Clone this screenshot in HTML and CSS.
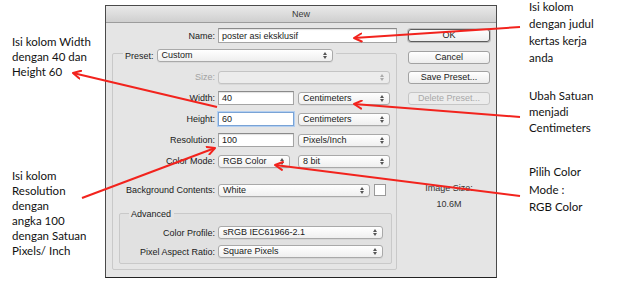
FILE: index.html
```html
<!DOCTYPE html>
<html lang="id">
<head>
    <meta charset="UTF-8">
    <title>New</title>
    <link rel="stylesheet" href="styles.css">
</head>
<body>
<div class="page">
    <div class="notes-left">
        <p class="note note-width">Isi kolom Width<br>dengan 40 dan<br>Height 60</p>
        <p class="note note-res">Isi kolom<br>Resolution<br>dengan<br>angka 100<br>dengan Satuan<br>Pixels/ Inch</p>
    </div>

    <div class="dialog">
        <div class="titlebar">New</div>
        <div class="dlg-body">
            <div class="dlg-main">
                <div class="row row-name">
                    <span class="lbl lbl-top">Name:</span>
                    <div class="field w-name">poster asi eksklusif</div>
                </div>

                <div class="group">
                    <div class="group-head">
                        <span class="head-lbl">Preset:</span>
                        <div class="sel w-preset">Custom</div>
                    </div>
                    <div class="row row-size">
                        <span class="lbl dim">Size:</span>
                        <div class="sel w-size disabled"></div>
                    </div>
                    <div class="row">
                        <span class="lbl">Width:</span>
                        <div class="field w-num">40</div>
                        <div class="sel w-unit">Centimeters</div>
                    </div>
                    <div class="row">
                        <span class="lbl">Height:</span>
                        <div class="field w-num focus">60</div>
                        <div class="sel w-unit">Centimeters</div>
                    </div>
                    <div class="row">
                        <span class="lbl">Resolution:</span>
                        <div class="field w-num">100</div>
                        <div class="sel w-unit">Pixels/Inch</div>
                    </div>
                    <div class="row">
                        <span class="lbl">Color Mode:</span>
                        <div class="sel w-mode">RGB Color</div>
                        <div class="sel w-unit">8 bit</div>
                    </div>
                    <div class="row row-bg">
                        <span class="lbl">Background Contents:</span>
                        <div class="sel w-bg">White</div>
                        <div class="swatch"></div>
                    </div>

                    <div class="group adv">
                        <div class="group-head adv-head">
                            <span class="head-lbl">Advanced</span>
                        </div>
                        <div class="row row-cp">
                            <span class="lbl">Color Profile:</span>
                            <div class="sel w-adv">sRGB IEC61966-2.1</div>
                        </div>
                        <div class="row row-par">
                            <span class="lbl">Pixel Aspect Ratio:</span>
                            <div class="sel w-adv">Square Pixels</div>
                        </div>
                    </div>
                </div>
            </div>

            <div class="dlg-side">
                <div class="btn btn-default">OK</div>
                <div class="btn btn-cancel">Cancel</div>
                <div class="btn btn-save">Save Preset...</div>
                <div class="btn btn-delete disabled">Delete Preset...</div>
                <div class="image-size">
                    <span>Image Size:</span>
                    <span>10.6M</span>
                </div>
            </div>
        </div>
    </div>

    <div class="notes-right">
        <p class="note note-name">Isi kolom<br>dengan judul<br>kertas kerja<br>anda</p>
        <p class="note note-unit">Ubah Satuan<br>menjadi<br>Centimeters</p>
        <p class="note note-mode">Pilih Color<br>Mode :<br>RGB Color</p>
    </div>

    <!-- panah anotasi -->
    <svg class="arrows" width="639" height="288" viewBox="0 0 639 288">
        <defs>
            <marker id="head" viewBox="0 0 10 10" refX="8.5" refY="5" markerWidth="10" markerHeight="10" markerUnits="userSpaceOnUse" orient="auto">
                <path d="M1 1 L8.5 5 L1 9" fill="none" stroke="#f2231d" stroke-width="2" stroke-linecap="round" stroke-linejoin="round"/>
            </marker>
        </defs>
        <g stroke="#f2231d" stroke-width="2" fill="none" marker-end="url(#head)">
            <line x1="520" y1="27" x2="354" y2="38"/>
            <line x1="217" y1="107" x2="73" y2="73"/>
            <line x1="520" y1="117" x2="354" y2="104"/>
            <line x1="82" y1="198" x2="215" y2="148"/>
            <line x1="520" y1="196" x2="275" y2="165"/>
        </g>
    </svg>
</div>
</body>
</html>
```

FILE: styles.css
```css
body {
    margin: 0;
    background: #fff;
    font-family: "Liberation Sans", Arial, sans-serif;
}

.page {
    position: relative;
    display: flex;
    width: 639px;
    height: 288px;
    overflow: hidden;
}

/* catatan di kiri dan kanan */
.note {
    margin: 0;
    font-family: Lato, "Noto Sans", sans-serif;
    font-size: 11.5px;
    color: #111;
}

.notes-left {
    width: 105px;
    padding-left: 12px;
    box-sizing: border-box;
    flex-shrink: 0;
}

.note-width {
    line-height: 15px;
    margin-top: 34px;
}

.note-res {
    line-height: 15px;
    margin-top: 89px;
}

.notes-right {
    margin-left: 32px;
}

.note-name {
    line-height: 17px;
    margin-top: -2px;
}

.note-unit {
    line-height: 16px;
    margin-top: 22px;
}

.note-mode {
    line-height: 17.5px;
    margin-top: 27px;
}

/* dialog */
.dialog {
    width: 392px;
    height: 273px;
    margin-top: 5px;
    flex-shrink: 0;
    box-sizing: border-box;
    border: 1px solid #4a4a4a;
    border-bottom-color: #222;
    background: #e5e5e5;
    font-size: 9px;
    color: #1a1a1a;
}

.titlebar {
    height: 16px;
    line-height: 16px;
    text-align: center;
    color: #3a3a3a;
    background: linear-gradient(#e9e9e9, #cfcfcf);
    border-bottom: 1px solid #9c9c9c;
}

.dlg-body {
    display: flex;
}

.dlg-main {
    width: 291px;
}

.dlg-side {
    width: 82px;
    margin-left: 11px;
    display: flex;
    flex-direction: column;
}

.row {
    display: flex;
    align-items: center;
    height: 14px;
    margin-top: 7px;
}

.lbl {
    width: 102px;
    padding-right: 3px;
    text-align: right;
    flex-shrink: 0;
}

.lbl-top {
    width: 109px;
}

.adv .lbl {
    width: 95px;
}

.dim {
    color: #a2a2a2;
}

.row-name {
    height: 15px;
    margin-top: 5px;
}

/* kotak isian */
.field {
    height: 14px;
    line-height: 13px;
    box-sizing: border-box;
    padding-left: 3px;
    background: #fff;
    border: 1px solid #a4a4a4;
    border-top-color: #8a8a8a;
    box-shadow: inset 0 1px 1px rgba(0, 0, 0, 0.12);
}

.row-name .field {
    height: 15px;
    line-height: 14px;
}

.field.focus {
    border-color: #79a3d6;
    box-shadow: 0 0 0 1px #b4cff0;
}

.w-name { width: 179px; }
.w-num { width: 76px; margin-right: 4px; }

/* pilihan */
.sel {
    position: relative;
    height: 13px;
    line-height: 11px;
    box-sizing: border-box;
    padding-left: 4px;
    border: 1px solid #a9a9a9;
    border-radius: 3px;
    background: linear-gradient(#ffffff, #efefef);
    box-shadow: 0 1px 0 rgba(0, 0, 0, 0.05);
}

.sel::before,
.sel::after {
    content: "";
    position: absolute;
    right: 5px;
    border-left: 2px solid transparent;
    border-right: 2px solid transparent;
}

.sel::before {
    top: 2px;
    border-bottom: 3px solid #555;
}

.sel::after {
    bottom: 2px;
    border-top: 3px solid #555;
}

.sel.disabled {
    background: #ececec;
    border-color: #c4c4c4;
}

.sel.disabled::before { border-bottom-color: #aaa; }
.sel.disabled::after { border-top-color: #aaa; }

.w-preset { width: 176px; }
.w-size { width: 172px; }
.w-unit { width: 92px; }
.w-mode { width: 72px; margin-right: 8px; }
.w-bg { width: 152px; margin-right: 4px; }
.w-adv { width: 165px; }

.swatch {
    width: 10px;
    height: 10px;
    background: #fff;
    border: 1px solid #9a9a9a;
}

/* kelompok */
.group {
    width: 285px;
    height: 217px;
    margin-top: 10px;
    margin-left: 6px;
    box-sizing: border-box;
    border: 1px solid #c9c9c9;
    border-radius: 2px;
}

.group-head {
    display: flex;
    align-items: center;
    width: fit-content;
    height: 13px;
    margin-top: -5px;
    margin-left: 10px;
    padding: 0 3px 0 2px;
    background: #e5e5e5;
}

.head-lbl {
    margin-right: 3px;
}

.row-size {
    margin-top: 8px;
}

.row-bg {
    margin-top: 15px;
}

.adv {
    width: 273px;
    height: 51px;
    margin-top: 16px;
    background: #e1e1e1;
}

.adv-head {
    height: 11px;
    margin-top: -6px;
    margin-left: 9px;
}

.adv-head .head-lbl {
    margin-right: 0;
}

.row-cp {
    height: 13px;
    margin-top: 7px;
}

.row-par {
    height: 13px;
    margin-top: 6px;
}

/* tombol */
.btn {
    height: 13px;
    line-height: 11px;
    box-sizing: border-box;
    text-align: center;
    border: 1px solid #a2a2a2;
    border-radius: 3px;
    background: linear-gradient(#ffffff, #ededed);
}

.btn-default {
    margin-top: 6px;
    border-color: #5c5c5c;
    box-shadow: 0 0 0 1px #bdbdbd;
}

.btn-cancel { margin-top: 9px; }
.btn-save { margin-top: 7px; }
.btn-delete { margin-top: 8px; }

.btn.disabled {
    color: #a8a8a8;
    border-color: #c6c6c6;
    background: #ececec;
}

.image-size {
    display: flex;
    flex-direction: column;
    align-items: center;
    margin-top: 75px;
    line-height: 16px;
    color: #333;
}

.arrows {
    position: absolute;
    left: 0;
    top: 0;
    pointer-events: none;
}
```
